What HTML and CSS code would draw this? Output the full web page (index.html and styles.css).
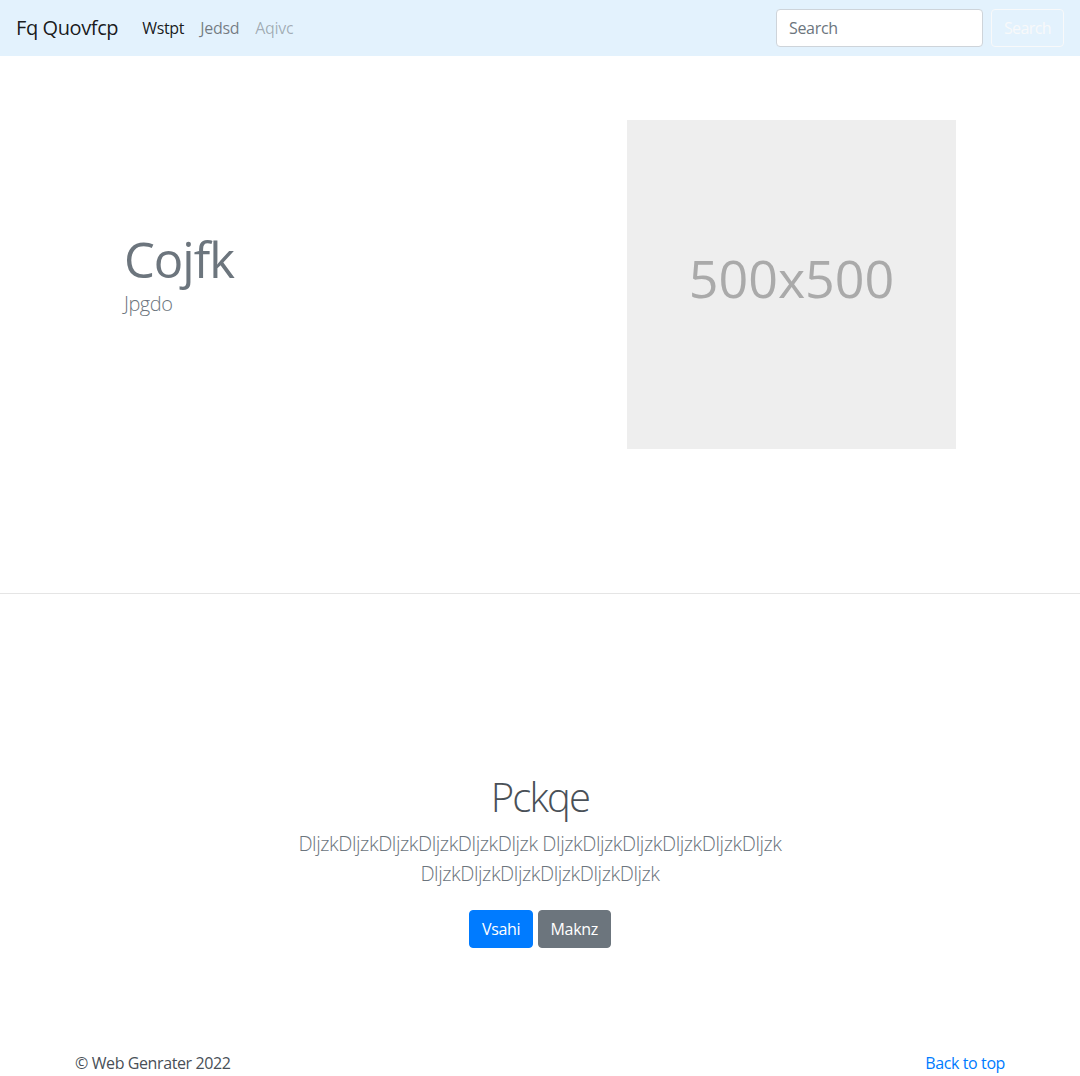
FILE: index.html
```html
<!DOCTYPE html>
<html lang="en">
<head>
<meta charset="utf-8">
<title>Fq Quovfcp</title>
<link rel="stylesheet" href="styles.css">
</head>
<body>
<nav class="navbar">
  <a class="brand" href="#">Fq Quovfcp</a>
  <ul class="nav">
    <li><a class="nav-link active" href="#">Wstpt</a></li>
    <li><a class="nav-link" href="#">Jedsd</a></li>
    <li><a class="nav-link disabled" href="#">Aqivc</a></li>
  </ul>
  <form class="search">
    <input class="search-input" type="text" placeholder="Search">
    <button class="btn btn-outline-light" type="button">Search</button>
  </form>
</nav>

<section class="hero">
  <div class="hero-row">
    <div class="hero-text">
      <h1 class="hero-title">Cojfk</h1>
      <p class="hero-lead">Jpgdo</p>
    </div>
    <div class="hero-media">
      <svg class="placeholder" width="329" height="329" viewBox="0 0 329 329">
        <rect width="329" height="329" fill="#eeeeee"/>
        <text x="50%" y="50%" fill="#aaaaaa" text-anchor="middle" dominant-baseline="middle" class="ph-text">500x500</text>
      </svg>
    </div>
  </div>
</section>

<section class="jumbo">
  <h2 class="jumbo-title">Pckqe</h2>
  <p class="jumbo-lead">DljzkDljzkDljzkDljzkDljzkDljzk DljzkDljzkDljzkDljzkDljzkDljzk DljzkDljzkDljzkDljzkDljzkDljzk</p>
  <p class="jumbo-actions">
    <a class="btn btn-primary" href="#">Vsahi</a>
    <a class="btn btn-secondary" href="#">Maknz</a>
  </p>
</section>

<footer class="footer">
  <p class="copy">© Web Genrater 2022</p>
  <a class="top-link" href="#">Back to top</a>
</footer>
</body>
</html>
```

FILE: styles.css
```css
* { box-sizing: border-box; }
html, body { margin: 0; padding: 0; }
body {
  font-family: "Open Sans", "Noto Sans", sans-serif;
  font-size: 16px;
  line-height: 1.5;
  color: #212529;
  background: #fff;
}
a { text-decoration: none; }

.navbar {
  display: flex;
  align-items: center;
  height: 56px;
  padding: 8px 16px;
  background: #e3f2fd;
}
.brand {
  font-size: 20px;
  line-height: 30px;
  color: rgba(0,0,0,.9);
  margin-right: 16px;
  letter-spacing: -0.4px;
}
.nav {
  display: flex;
  list-style: none;
  margin: 0;
  padding: 0;
  flex: 1;
}
.nav-link {
  display: block;
  padding: 8px;
  color: rgba(0,0,0,.5);
  letter-spacing: -0.3px;
}
.nav-link.active { color: rgba(0,0,0,.9); }
.nav-link.disabled { color: rgba(0,0,0,.3); }

.search { display: flex; align-items: center; }
.search-input {
  width: 207px;
  height: 38px;
  padding: 6px 12px;
  font: inherit;
  font-size: 16px;
  color: #495057;
  border: 1px solid #ced4da;
  border-radius: 4px;
  background: #fff;
  margin-right: 8px;
}
.search-input::placeholder { color: #6c757d; letter-spacing: -0.3px; }

.btn {
  display: inline-block;
  font: inherit;
  font-size: 16px;
  line-height: 24px;
  padding: 6px 12px;
  border: 1px solid transparent;
  border-radius: 4px;
  background: transparent;
  letter-spacing: -0.3px;
}
.btn-outline-light { color: #f8f9fa; border-color: #f8f9fa; letter-spacing: -0.6px; }
.btn-primary { color: #fff; background: #007bff; border-color: #007bff; }
.btn-secondary { color: #fff; background: #6c757d; border-color: #6c757d; }

.hero {
  padding: 64px 0 144px;
  border-bottom: 1px solid #e5e5e5;
}
.hero-row {
  display: flex;
  align-items: center;
  width: 960px;
  margin: 0 auto;
}
.hero-text {
  width: 480px;
  padding-left: 64px;
  padding-bottom: 21px;
}
.hero-title {
  margin: 0;
  font-size: 49px;
  font-weight: 400;
  line-height: 50px;
  color: #6c757d;
  letter-spacing: -1px;
}
.hero-lead {
  margin: 10px 0 0;
  font-size: 20px;
  font-weight: 300;
  line-height: 20px;
  color: #6c757d;
  letter-spacing: -0.5px;
}
.hero-media {
  width: 480px;
  padding-left: 87px;
}
.placeholder { display: block; }
.ph-text { font-family: "Open Sans", sans-serif; font-size: 52px; }

.jumbo {
  padding: 179px 0 0;
  text-align: center;
}
.jumbo-title {
  margin: 0 0 8px;
  font-size: 40px;
  font-weight: 300;
  line-height: 1.2;
  color: #495057;
  letter-spacing: -1.8px;
}
.jumbo-lead {
  width: 500px;
  margin: 0 auto 13px;
  font-size: 20px;
  font-weight: 300;
  line-height: 30px;
  color: #6c757d;
  letter-spacing: -0.44px;
}
.jumbo-actions { margin: 0; }
.jumbo-actions .btn { margin: 8px 0; }

.footer {
  display: flex;
  justify-content: space-between;
  align-items: center;
  width: 930px;
  margin: 0 auto;
  padding-top: 95px;
  color: #6c757d;
}
.copy { margin: 0; color: #495057; letter-spacing: -0.4px; }
.top-link { color: #007bff; letter-spacing: -0.4px; }
```
